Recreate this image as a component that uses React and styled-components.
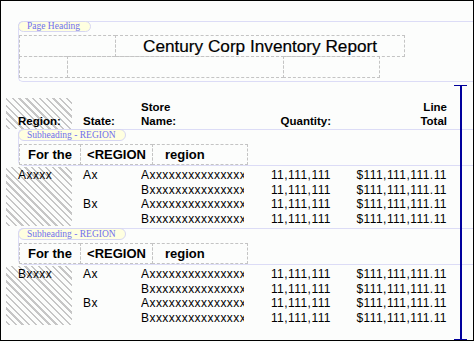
import React from 'react';
import styled, { createGlobalStyle } from 'styled-components';

const Global = createGlobalStyle`
  html, body { margin: 0; padding: 0; background: #fcfdfc; }
  body { font-family: "Liberation Sans", Arial, sans-serif; color: #000; }
`;

const Frame = styled.div`
  position: relative;
  box-sizing: border-box;
  width: 474px;
  height: 341px;
  border: 1px solid #000;
  background: #fcfdfc;
  padding-top: 20px;
  overflow: hidden;
`;

const Section = styled.div`
  box-sizing: border-box;
  margin-left: 17px;
  height: ${(p) => p.$h}px;
  border: 1px solid #dcdcf6;
  border-right: none;
  border-radius: 5px 0 0 5px;
`;

const Tag = styled.div`
  box-sizing: border-box;
  width: ${(p) => p.$w}px;
  height: ${(p) => p.$h}px;
  margin: -1px 0 0 -1px;
  padding-left: 8px;
  background: #ffffe0;
  border: 1px solid #d6d6f2;
  border-radius: 6px;
  font-family: "Liberation Serif", "Times New Roman", serif;
  font-size: 9.5px;
  line-height: ${(p) => p.$h - 2}px;
  color: #6f6fee;
  white-space: nowrap;
`;

const DashRow = styled.div`
  display: flex;
  margin-top: ${(p) => p.$mt}px;
`;

const DashCell = styled.div`
  box-sizing: border-box;
  width: ${(p) => p.$w}px;
  height: ${(p) => p.$h}px;
  border: 1px dashed #c4c4c4;
  & + & { margin-left: -1px; }
  display: flex;
  align-items: center;
  justify-content: ${(p) => (p.$center ? 'center' : 'flex-start')};
  padding-left: ${(p) => p.$pl || 0}px;
  white-space: nowrap;
`;

const Title = styled.span`
  font-size: 17.2px;
  -webkit-text-stroke: 0.2px #000;
`;

const GroupLabel = styled.span`
  font-size: 13px;
  font-weight: bold;
`;

const hatch = `
  background-image: repeating-linear-gradient(45deg, transparent 0 1.6px, #c6c6c6 1.6px 3.2px, transparent 3.2px 4.8px);
`;

const HeaderBand = styled.div`
  box-sizing: border-box;
  height: 47px;
  padding-left: 5px;
  display: flex;
  align-items: flex-end;
`;

const HCell = styled.div`
  box-sizing: border-box;
  width: ${(p) => p.$w}px;
  height: 31px;
  padding-left: ${(p) => p.$pl || 0}px;
  display: flex;
  flex-direction: column;
  justify-content: flex-end;
  align-items: ${(p) => (p.$right ? 'flex-end' : 'flex-start')};
  text-align: ${(p) => (p.$right ? 'right' : 'left')};
  font-size: 11.5px;
  font-weight: bold;
  line-height: 14.7px;
  white-space: nowrap;
  ${(p) => p.$hatch && hatch}
`;

const DetailBand = styled.div`
  box-sizing: border-box;
  height: ${(p) => p.$h}px;
  padding: 1px 0 0 5px;
`;

const DetailGrid = styled.div`
  display: grid;
  grid-template-columns: 66px 69px 103px 87px 116px;
  grid-auto-rows: 14.7px;
  font-size: 12px;
  line-height: 14.7px;
  letter-spacing: 0.45px;
`;

const DCell = styled.div`
  box-sizing: border-box;
  padding-left: ${(p) => p.$pl || 0}px;
  padding-top: 1px;
  text-align: ${(p) => (p.$right ? 'right' : 'left')};
  white-space: nowrap;
  overflow: hidden;
  grid-row: ${(p) => (p.$span ? `span ${p.$span}` : 'auto')};
  ${(p) => p.$hatch && hatch}
`;

const Ruler = styled.div`
  position: absolute;
  left: 453px;
  top: 84px;
  width: 13px;
  height: 255px;
  box-sizing: border-box;
  border-top: 1px solid #00009c;
  border-bottom: 1px solid #00009c;
  &::before {
    content: '';
    position: absolute;
    left: 6px;
    top: 0;
    bottom: 0;
    width: 1.5px;
    background: #00009c;
  }
`;

const Sub = () => (
  <Section $h={37}>
    <Tag $w={108} $h={12}>Subheading - REGION</Tag>
    <DashRow $mt={3}>
      <DashCell $w={62} $h={21} $center><GroupLabel>For the</GroupLabel></DashCell>
      <DashCell $w={73} $h={21} $center><GroupLabel>&lt;REGION</GroupLabel></DashCell>
      <DashCell $w={96} $h={21} $pl={12}><GroupLabel>region</GroupLabel></DashCell>
    </DashRow>
  </Section>
);

const Detail = ({ region, h }) => {
  const rows = [
    ['Ax', 'A'],
    [null, 'B'],
    ['Bx', 'A'],
    [null, 'B'],
  ];
  return (
    <DetailBand $h={h}>
      <DetailGrid>
        {rows.map((r, i) => (
          <React.Fragment key={i}>
            {i === 0 && <DCell $span={4} $hatch $pl={12}>{region}</DCell>}
            {r[0] && <DCell $span={2} $pl={11}>{r[0]}</DCell>}
            <DCell>{r[1] + 'xxxxxxxxxxxxxxxxxx'}</DCell>
            <DCell $right>11,111,111</DCell>
            <DCell $right>$111,111,111.11</DCell>
          </React.Fragment>
        ))}
      </DetailGrid>
    </DetailBand>
  );
};

export default function App() {
  return (
    <>
      <Global />
      <Frame>
        <Section $h={61}>
          <Tag $w={73} $h={11}>Page Heading</Tag>
          <DashRow $mt={3}>
            <DashCell $w={97} $h={22} />
            <DashCell $w={290} $h={22} $center><Title>Century Corp Inventory Report</Title></DashCell>
          </DashRow>
          <DashRow $mt={-1}>
            <DashCell $w={49} $h={22} />
            <DashCell $w={217} $h={22} />
            <DashCell $w={97} $h={22} />
          </DashRow>
        </Section>
        <HeaderBand>
          <HCell $w={66} $pl={12} $hatch>Region:</HCell>
          <HCell $w={69} $pl={11}>State:</HCell>
          <HCell $w={103}>Store<br />Name:</HCell>
          <HCell $w={87} $right>Quantity:</HCell>
          <HCell $w={116} $right>Line<br />Total</HCell>
        </HeaderBand>
        <Sub />
        <Detail region="Axxxx" h={62} />
        <Sub />
        <Detail region="Bxxxx" h={70} />
        <Ruler />
      </Frame>
    </>
  );
}
